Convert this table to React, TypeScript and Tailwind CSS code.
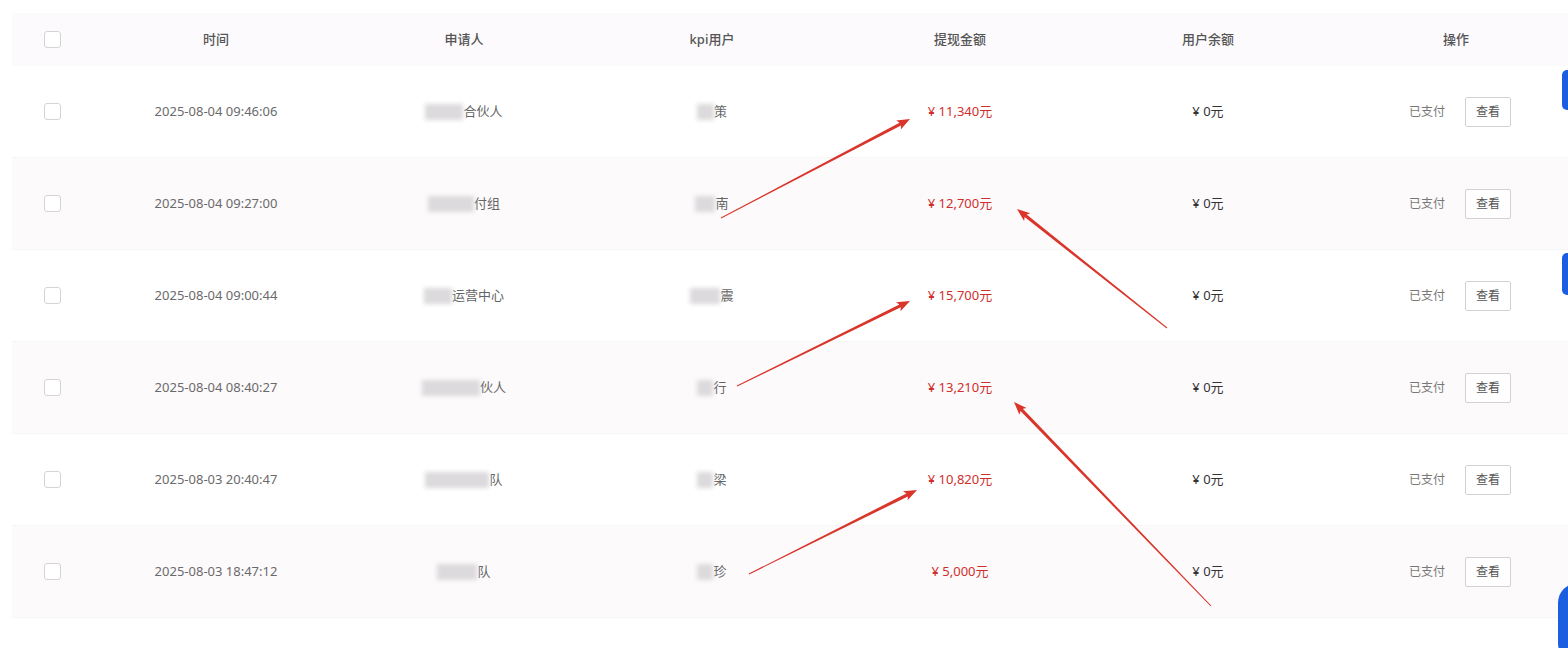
import React from "react";

type Row = {
  time: string;
  applicantBlur: number;
  applicant: string;
  kpiBlur: number;
  kpi: string;
  amount: string;
};

const rows: Row[] = [
  { time: "2025-08-04 09:46:06", applicantBlur: 38, applicant: "合伙人", kpiBlur: 17, kpi: "策", amount: "11,340" },
  { time: "2025-08-04 09:27:00", applicantBlur: 46, applicant: "付组", kpiBlur: 20, kpi: "南", amount: "12,700" },
  { time: "2025-08-04 09:00:44", applicantBlur: 28, applicant: "运营中心", kpiBlur: 30, kpi: "震", amount: "15,700" },
  { time: "2025-08-04 08:40:27", applicantBlur: 58, applicant: "伙人", kpiBlur: 16, kpi: "行", amount: "13,210" },
  { time: "2025-08-03 20:40:47", applicantBlur: 64, applicant: "队", kpiBlur: 16, kpi: "梁", amount: "10,820" },
  { time: "2025-08-03 18:47:12", applicantBlur: 40, applicant: "队", kpiBlur: 16, kpi: "珍", amount: "5,000" },
];

// annotation arrows: tail -> head
const arrows = [
  [721, 218, 910, 119],
  [1167, 328, 1017, 209],
  [737, 386, 910, 301],
  [1211, 606, 1014, 402],
  [749, 574, 917, 490],
];

function arrowPoints(x1: number, y1: number, x2: number, y2: number) {
  const len = Math.hypot(x2 - x1, y2 - y1);
  const dx = (x2 - x1) / len;
  const dy = (y2 - y1) / len;
  const nx = -dy;
  const ny = dx;
  const bx = x2 - dx * 11;
  const by = y2 - dy * 11;
  const p = (x: number, y: number) => `${x.toFixed(1)},${y.toFixed(1)}`;
  return [
    p(x1 + nx * 0.5, y1 + ny * 0.5),
    p(bx + nx * 1.6, by + ny * 1.6),
    p(x2 - dx * 13 + nx * 5, y2 - dy * 13 + ny * 5),
    p(x2, y2),
    p(x2 - dx * 13 - nx * 5, y2 - dy * 13 - ny * 5),
    p(bx - nx * 1.6, by - ny * 1.6),
    p(x1 - nx * 0.5, y1 - ny * 0.5),
  ].join(" ");
}

function Checkbox() {
  return <div className="h-[17px] w-[17px] rounded-[3px] border border-[#d4d4d4] bg-white" />;
}

function Blur({ w }: { w: number }) {
  return (
    <span
      className="inline-block h-[16px] bg-[#dcdadc] blur-[2px]"
      style={{ width: w }}
    />
  );
}

export default function App() {
  return (
    <div
      className="relative h-[648px] w-[1568px] overflow-hidden bg-white text-[13px]"
      style={{ fontFamily: '"Noto Sans", "Noto Sans CJK SC", sans-serif' }}
    >
      <div className="pt-[13px] pl-3">
        <div className="grid w-[1568px] grid-cols-[80px_repeat(6,248px)]">
          {/* header */}
          <div className="contents">
            <div className="flex h-[53px] items-center justify-center bg-[#fcfafd]">
              <Checkbox />
            </div>
            {["时间", "申请人", "kpi用户", "提现金额", "用户余额", "操作"].map((h) => (
              <div
                key={h}
                className="flex h-[53px] items-center justify-center bg-[#fcfafd] font-medium text-[#555]"
              >
                {h}
              </div>
            ))}
          </div>

          {rows.map((r, i) => {
            const bg = i % 2 === 1 ? "bg-[#fdfafc]" : "bg-white";
            const cell = `flex h-[92px] items-center justify-center border-b border-[#f8f5f7] ${bg}`;
            return (
              <div key={r.time} className="contents">
                <div className={cell}>
                  <Checkbox />
                </div>
                <div className={`${cell} text-[#6a6a6a]`}>{r.time}</div>
                <div className={`${cell} text-[#666]`}>
                  <Blur w={r.applicantBlur} />
                  <span>{r.applicant}</span>
                </div>
                <div className={`${cell} text-[#666]`}>
                  <Blur w={r.kpiBlur} />
                  <span>{r.kpi}</span>
                </div>
                <div className={`${cell} text-[#cf2f2b]`}>¥ {r.amount}元</div>
                <div className={`${cell} text-[#333]`}>¥ 0元</div>
                <div className={`${cell} gap-5 pl-2`}>
                  <span className="text-[12px] text-[#777]">已支付</span>
                  <button
                    type="button"
                    className="h-[30px] w-[46px] rounded-[2px] border border-[#d2d2d2] bg-white text-[12px] text-[#555]"
                  >
                    查看
                  </button>
                </div>
              </div>
            );
          })}
        </div>
      </div>

      {/* floating blue tabs on the right edge */}
      <div className="absolute right-0 top-[70px] h-[40px] w-[6px] rounded-l-[5px] bg-[#1b5fe0]" />
      <div className="absolute right-0 top-[253px] h-[42px] w-[6px] rounded-l-[5px] bg-[#1b5fe0]" />
      <div className="absolute right-[-30px] top-[583px] h-[80px] w-[40px] rounded-l-[20px] bg-[#1b5fe0]" />

      {/* annotation arrows */}
      <svg className="pointer-events-none absolute inset-0" width="1568" height="648">
        {arrows.map(([x1, y1, x2, y2], i) => (
          <polygon key={i} points={arrowPoints(x1, y1, x2, y2)} fill="#d9352a" />
        ))}
      </svg>
    </div>
  );
}
